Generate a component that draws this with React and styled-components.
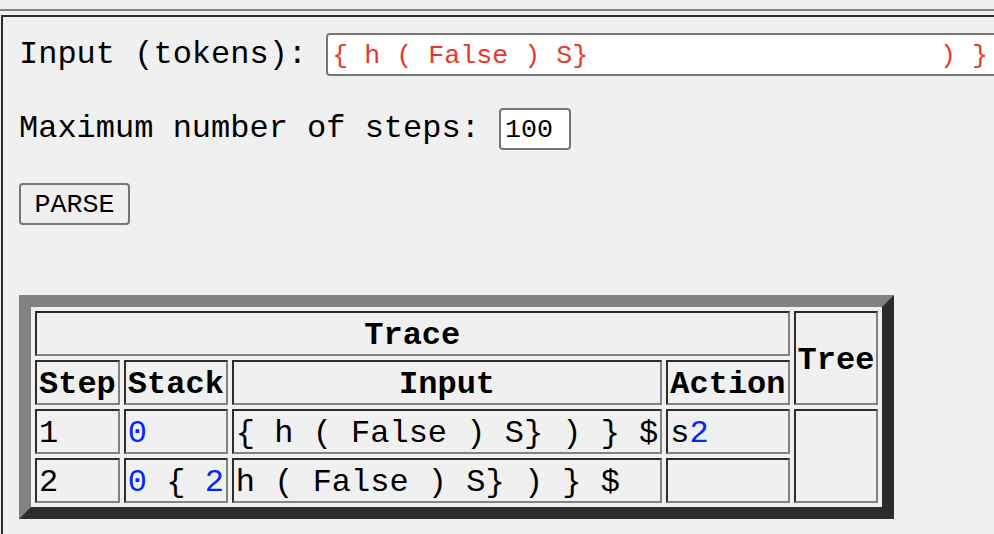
import React from "react";
import styled, { createGlobalStyle } from "styled-components";

const GlobalStyle = createGlobalStyle`
  html, body {
    margin: 0;
    padding: 0;
    background: #f0f0f0;
    overflow: hidden;
    font-family: "Liberation Mono", "DejaVu Sans Mono", monospace;
    color: #000;
  }
`;

const TopRule = styled.div`
  height: 2px;
  margin-top: 9px;
  background: #828282;
`;

const Panel = styled.div`
  margin: 4px 0 0 1px;
  width: 1200px;
  min-height: 700px;
  box-sizing: border-box;
  border-top: 2px solid #2c2c2c;
  border-left: 2px solid #2c2c2c;
  padding: 16px 0 0 16px;
  font-size: 32px;
`;

const Row = styled.div`
  display: flex;
  align-items: flex-start;
  margin-bottom: ${(p) => p.$gap}px;
`;

const Label = styled.span`
  white-space: pre;
  font-size: 32px;
  line-height: ${(p) => p.$lh}px;
  padding-top: ${(p) => p.$pt || 0}px;
`;

const Field = styled.input`
  box-sizing: border-box;
  width: ${(p) => p.$w}px;
  height: ${(p) => p.$h}px;
  border: 2px solid #767676;
  border-radius: 4px;
  padding: 3px 4px 1px;
  background: #fff;
  color: ${(p) => p.$color || "#000"};
  font-family: "Liberation Mono", "DejaVu Sans Mono", monospace;
  font-size: 26.67px;
  white-space: pre;
  outline: none;
`;

const Button = styled.button`
  box-sizing: border-box;
  width: 111px;
  height: 42px;
  border: 2px solid #767676;
  border-radius: 4px;
  padding: 2px 12px 0;
  background: #efefef;
  color: #000;
  font-family: "Liberation Mono", "DejaVu Sans Mono", monospace;
  font-size: 26.67px;
`;

const Table = styled.table`
  border-collapse: separate;
  border-spacing: 4px;
  border-width: 12px;
  border-style: solid;
  border-color: #828282 #2c2c2c #2c2c2c #828282;
  font-family: "Liberation Mono", "DejaVu Sans Mono", monospace;
  font-size: 32px;
`;

const Cell = styled.td`
  border-width: 2px;
  border-style: solid;
  border-color: #2c2c2c #828282 #828282 #2c2c2c;
  padding: 4px 2px 0;
  line-height: 37px;
  white-space: pre;
  text-align: left;
  vertical-align: middle;
  font-weight: normal;
`;

const Head = styled(Cell).attrs({ as: "th" })`
  font-weight: bold;
  text-align: center;
`;

const Num = styled.span`
  color: #0028ff;
`;

const tokens = "{ h ( False ) S}" + " ".repeat(22) + ") }";

export default function App() {
  return (
    <>
      <GlobalStyle />
      <TopRule />
      <Panel>
        <Row $gap={32}>
          <Label $lh={42} $pt={1}>{"Input (tokens): "}</Label>
          <Field $w={720} $h={43} $color="#e8362b" defaultValue={tokens} />
        </Row>
        <Row $gap={33}>
          <Label $lh={42}>{"Maximum number of steps: "}</Label>
          <Field $w={72} $h={42} defaultValue="100" />
        </Row>
        <Row $gap={70}>
          <Button>PARSE</Button>
        </Row>
        <Table>
          <tbody>
            <tr>
              <Head colSpan={4}>Trace</Head>
              <Head rowSpan={2}>Tree</Head>
            </tr>
            <tr>
              <Head>Step</Head>
              <Head>Stack</Head>
              <Head>Input</Head>
              <Head>Action</Head>
            </tr>
            <tr>
              <Cell>1</Cell>
              <Cell>
                <Num>0</Num>
              </Cell>
              <Cell>{"{ h ( False ) S} ) } $"}</Cell>
              <Cell>
                s<Num>2</Num>
              </Cell>
              <Cell rowSpan={2}></Cell>
            </tr>
            <tr>
              <Cell>2</Cell>
              <Cell>
                <Num>0</Num>
                {" { "}
                <Num>2</Num>
              </Cell>
              <Cell>{"h ( False ) S} ) } $"}</Cell>
              <Cell></Cell>
            </tr>
          </tbody>
        </Table>
      </Panel>
    </>
  );
}
